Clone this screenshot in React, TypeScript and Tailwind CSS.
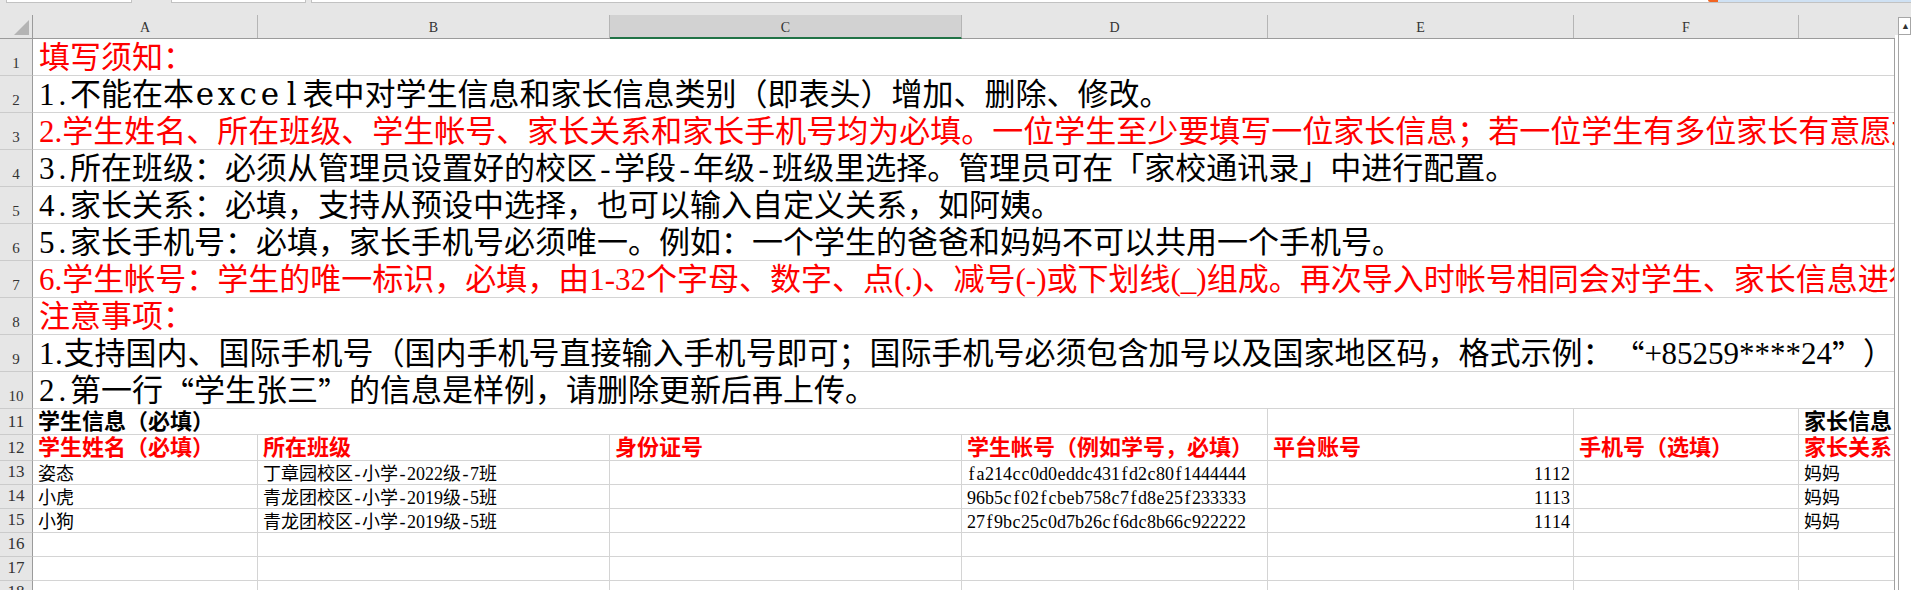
import type { ReactNode } from "react";

interface Note {
  text: string;
  red?: boolean;
}

const notes: Note[] = [
  { text: "填写须知：", red: true },
  { text: "1.不能在本excel表中对学生信息和家长信息类别（即表头）增加、删除、修改。" },
  {
    text: "2.学生姓名、所在班级、学生帐号、家长关系和家长手机号均为必填。一位学生至少要填写一位家长信息；若一位学生有多位家长有意愿加入，可在后面继续填写。",
    red: true,
  },
  { text: "3.所在班级：必须从管理员设置好的校区-学段-年级-班级里选择。管理员可在「家校通讯录」中进行配置。" },
  { text: "4.家长关系：必填，支持从预设中选择，也可以输入自定义关系，如阿姨。" },
  { text: "5.家长手机号：必填，家长手机号必须唯一。例如：一个学生的爸爸和妈妈不可以共用一个手机号。" },
  {
    text: "6.学生帐号：学生的唯一标识，必填，由1-32个字母、数字、点(.)、减号(-)或下划线(_)组成。再次导入时帐号相同会对学生、家长信息进行更新。",
    red: true,
  },
  { text: "注意事项：", red: true },
  { text: "1.支持国内、国际手机号（国内手机号直接输入手机号即可；国际手机号必须包含加号以及国家地区码，格式示例：“+85259****24”）" },
  { text: "2.第一行“学生张三”的信息是样例，请删除更新后再上传。" },
];

const students = [
  { name: "姿态", klass: "丁章园校区-小学-2022级-7班", account: "fa214cc0d0eddc431fd2c80f1444444", platform: "1112", relation: "妈妈" },
  { name: "小虎", klass: "青龙团校区-小学-2019级-5班", account: "96b5cf02fcbeb758c7fd8e25f233333", platform: "1113", relation: "妈妈" },
  { name: "小狗", klass: "青龙团校区-小学-2019级-5班", account: "27f9bc25c0d7b26cf6dc8b66c922222", platform: "1114", relation: "妈妈" },
];

// latin glyphs sit in fixed slots like the sheet font; curly quotes are full width
function slot(ch: string, wide?: boolean) {
  if (!wide || /[0-9.]/.test(ch)) return "w-[0.5em]";
  if (/[a-zA-Z]/.test(ch)) return "w-[0.7em] font-[family-name:'DejaVu_Serif',serif]";
  if (/[()_]/.test(ch)) return "w-[0.75em]";
  return "w-[0.55em]";
}

function Txt({ s, wide }: { s: string; wide?: boolean }) {
  return (
    <>
      {Array.from(s).map((ch, i) => {
        if (ch === "“" || ch === "”") {
          return (
            <span key={i} className="font-[family-name:'Noto_Sans_CJK_SC',sans-serif]">
              {ch}
            </span>
          );
        }
        if (ch.charCodeAt(0) < 128) {
          return (
            <span key={i} className={`inline-block text-center ${slot(ch, wide)}`}>
              {ch}
            </span>
          );
        }
        return ch;
      })}
    </>
  );
}

function RowHead({ n, big }: { n: number; big?: boolean }) {
  return (
    <div
      className={`flex w-[33px] shrink-0 items-end justify-center border-r border-b border-r-[#9b9b9b] border-b-[#cbcbcb] bg-[#e6e6e6] pb-[4px] font-normal leading-none text-[#333] ${
        big ? "text-[17px]" : "text-[15px]"
      }`}
    >
      {n}
    </div>
  );
}

function Cell({
  w,
  children,
  right,
  tight,
}: {
  w: string;
  children?: ReactNode;
  right?: boolean;
  tight?: boolean;
}) {
  return (
    <div
      className={`flex shrink-0 items-end overflow-hidden whitespace-nowrap border-b border-[#d4d4d4] ${w} ${
        right ? "justify-end pr-[3px]" : "pl-[5px]"
      } ${tight ? "pb-[1px]" : "pb-[2px]"}`}
    >
      {children}
    </div>
  );
}

function ColHead({ w, label, selected }: { w: string; label?: string; selected?: boolean }) {
  return (
    <div
      className={`flex shrink-0 items-center justify-center border-r border-[#b5b5b5] pt-[3px] text-[14px] leading-none text-[#333] ${w} ${
        selected ? "-mb-px border-b-2 border-b-[#217346] bg-[#d2d2d2]" : ""
      }`}
    >
      {label}
    </div>
  );
}

function TopStrip() {
  return (
    <div className="flex h-[3px] shrink-0 bg-[#e6e6e6]">
      <div className="ml-[6px] w-[126px] border-x border-b border-[#c2c2c2] bg-white" />
      <div className="ml-[39px] w-[135px] border-x border-b border-[#c2c2c2] bg-white" />
      <div className="ml-[5px] flex flex-1 border-l border-b border-[#c2c2c2] bg-white">
        <div className="ml-auto w-[10px] rounded-bl-full bg-[#f26522]" />
        <div className="w-[193px] bg-[#cfe1f3]" />
      </div>
    </div>
  );
}

const cols = ["w-[225px] border-r", "w-[352px] border-r", "w-[352px] border-r", "w-[306px] border-r", "w-[306px] border-r", "w-[225px] border-r", "min-w-0 flex-1 shrink"];

export default function App() {
  return (
    <div className="flex h-[590px] w-[1911px] flex-col overflow-hidden bg-[#e6e6e6] font-[family-name:'Liberation_Serif','Noto_Sans_CJK_SC',serif]">
      <TopStrip />
      <div className="flex flex-1">
        <div className="flex w-[1895px] shrink-0 flex-col">
          {/* column letters */}
          <div className="flex shrink-0 flex-col pt-[12px]">
            <div className="flex h-[24px] border-b border-[#9b9b9b]">
              <div className="w-[33px] shrink-0 border-r border-[#9b9b9b]">
                <svg width="32" height="23" viewBox="0 0 32 23">
                  <polygon points="29,5 29,20 14,20" fill="#b4b4b4" />
                </svg>
              </div>
              <ColHead w="w-[225px]" label="A" />
              <ColHead w="w-[352px]" label="B" />
              <ColHead w="w-[352px]" label="C" selected />
              <ColHead w="w-[306px]" label="D" />
              <ColHead w="w-[306px]" label="E" />
              <ColHead w="w-[225px]" label="F" />
              <div className="flex-1" />
            </div>
          </div>

          <div className="flex flex-1 flex-col border-r border-[#a0a0a0] bg-white">
            {notes.map((note, i) => (
              <div key={i} className="flex h-[37px] shrink-0">
                <RowHead n={i + 1} />
                <div
                  className={`flex min-w-0 flex-1 items-end overflow-hidden whitespace-nowrap border-b border-[#d4d4d4] pl-[6px] pb-[2px] text-[31px] leading-[31px] ${
                    note.red ? "text-[#ff0000]" : "text-black"
                  }`}
                >
                  <Txt s={note.text} wide />
                </div>
              </div>
            ))}

            <div className="flex h-[26px] shrink-0 text-[22px] leading-none font-bold text-black">
              <RowHead n={11} big />
              <Cell w="w-[1235px] border-r" tight>
                学生信息（必填）
              </Cell>
              <Cell w="w-[306px] border-r" />
              <Cell w="w-[225px] border-r" />
              <Cell w="min-w-0 flex-1 shrink" tight>
                家长信息（必填）
              </Cell>
            </div>

            <div className="flex h-[26px] shrink-0 text-[22px] leading-none font-bold text-[#ff0000]">
              <RowHead n={12} big />
              <Cell w={cols[0]} tight>学生姓名（必填）</Cell>
              <Cell w={cols[1]} tight>所在班级</Cell>
              <Cell w={cols[2]} tight>身份证号</Cell>
              <Cell w={cols[3]} tight>学生帐号（例如学号，必填）</Cell>
              <Cell w={cols[4]} tight>平台账号</Cell>
              <Cell w={cols[5]} tight>手机号（选填）</Cell>
              <Cell w={cols[6]} tight>家长关系</Cell>
            </div>

            {students.map((s, i) => (
              <div key={s.account} className="flex h-[24px] shrink-0 text-[18px] leading-none text-black">
                <RowHead n={13 + i} big />
                <Cell w={cols[0]} tight>
                  {s.name}
                </Cell>
                <Cell w={cols[1]} tight>
                  <Txt s={s.klass} />
                </Cell>
                <Cell w={cols[2]} tight />
                <Cell w={cols[3]} tight>
                  <Txt s={s.account} />
                </Cell>
                <Cell w={cols[4]} tight right>
                  <Txt s={s.platform} />
                </Cell>
                <Cell w={cols[5]} tight />
                <Cell w={cols[6]} tight>
                  {s.relation}
                </Cell>
              </div>
            ))}

            {[16, 17, 18].map((n) => (
              <div key={n} className="flex h-[24px] shrink-0 text-[18px] leading-none">
                <RowHead n={n} big />
                {cols.map((c) => (
                  <Cell key={c} w={c} />
                ))}
              </div>
            ))}
          </div>
        </div>

        {/* vertical scrollbar */}
        <div className="flex flex-1 flex-col">
          <div className="h-[14px] shrink-0" />
          <div className="ml-[3px] flex h-[18px] shrink-0 items-center border border-[#a6a6a6] bg-white pl-[2px] text-[9px] leading-none text-[#333]">
            ▲
          </div>
          <div className="flex flex-1 bg-white pl-[3px]">
            <div className="flex-1 border-l border-[#a6a6a6]" />
          </div>
        </div>
      </div>
    </div>
  );
}
